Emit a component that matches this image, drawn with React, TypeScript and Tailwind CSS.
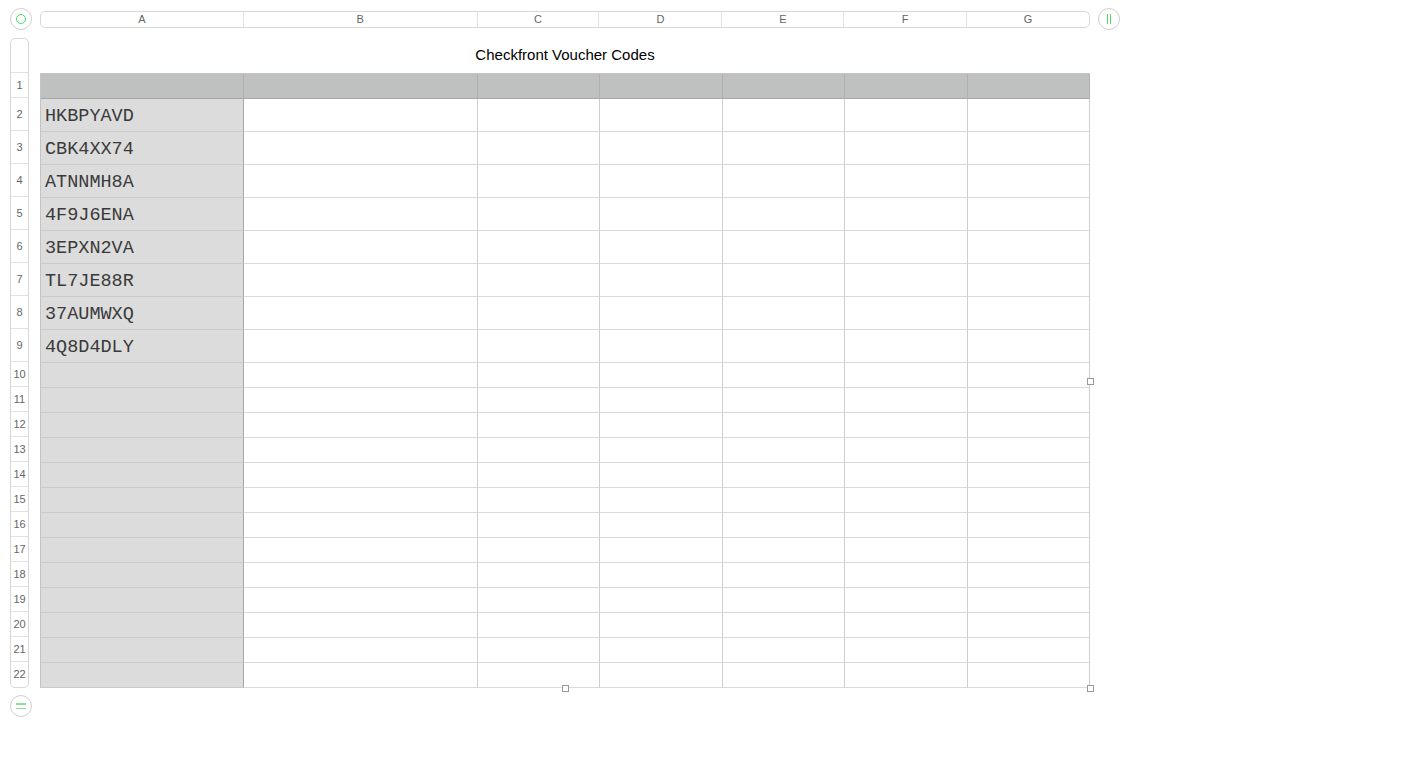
import React from 'react';

const columns = [
  { label: 'A', width: 204 },
  { label: 'B', width: 234 },
  { label: 'C', width: 122 },
  { label: 'D', width: 123 },
  { label: 'E', width: 122 },
  { label: 'F', width: 123 },
  { label: 'G', width: 122 },
];

const codes = ['HKBPYAVD', 'CBK4XX74', 'ATNNMH8A', '4F9J6ENA', '3EPXN2VA', 'TL7JE88R', '37AUMWXQ', '4Q8D4DLY'];

// row heights: header row, 8 code rows, 13 empty rows
const rows = Array.from({ length: 22 }, (_, i) => ({
  n: i + 1,
  h: i === 0 ? 25 : i <= 8 ? 33 : 25,
  code: i >= 1 && i <= 8 ? codes[i - 1] : '',
}));

const Handle = ({ x, y }: { x: number; y: number }) => (
  <div
    className="absolute w-[7px] h-[7px] bg-white border border-[#9a9a9a]"
    style={{ left: x - 3, top: y - 3 }}
  />
);

export default function App() {
  return (
    <div className="relative w-[1424px] h-[758px] bg-white font-['Liberation_Sans',Arial,sans-serif] text-[#333]">
      {/* top bar: select-all, column letters, add column */}
      <div className="flex items-center pt-[8px] pl-[10px]">
        <div className="w-[22px] h-[22px] rounded-full border border-[#cfcfcf] flex items-center justify-center">
          <div className="w-[10px] h-[10px] rounded-full border-[1.5px] border-[#4cd964]" />
        </div>
        <div className="ml-[8px] h-[17px] w-[1050px] flex rounded-[5px] border border-[#d8d8d8]">
          {columns.map((c, i) => (
            <div
              key={c.label}
              className={`flex items-center justify-center text-[11px] text-[#666] ${i < columns.length - 1 ? 'border-r border-[#e2e2e2]' : ''}`}
              style={{ width: c.width - (i === 0 ? 1 : 0) }}
            >
              {c.label}
            </div>
          ))}
        </div>
        <div className="ml-[8px] w-[22px] h-[22px] rounded-full border border-[#cfcfcf] flex items-center justify-center gap-[2px]">
          <div className="w-px h-[10px] bg-[#4cd964]" />
          <div className="w-px h-[10px] bg-[#4cd964]" />
        </div>
      </div>

      <div className="flex mt-[8px] pl-[10px]">
        {/* row numbers */}
        <div className="w-[19px] flex flex-col rounded-[5px] border border-[#d8d8d8]">
          <div className="h-[34px] border-b border-[#e2e2e2]" />
          {rows.map((r) => (
            <div
              key={r.n}
              className={`flex items-center justify-center text-[11px] text-[#666] ${r.n < 22 ? 'border-b border-[#e2e2e2]' : ''}`}
              style={{ height: r.h }}
            >
              {r.n}
            </div>
          ))}
        </div>

        {/* table */}
        <div className="ml-[11px] flex flex-col">
          <div className="h-[35px] flex items-center justify-center text-[15px] text-black">
            Checkfront Voucher Codes
          </div>
          <div className="flex flex-col border-l border-t border-[#c4c4c4]">
            {rows.map((r) => (
              <div key={r.n} className="flex" style={{ height: r.h }}>
                {columns.map((c, ci) => {
                  const header = r.n === 1;
                  const first = ci === 0;
                  let cls = 'border-b border-r ';
                  if (header) cls += 'bg-[#bfc0c0] border-b-[#a6a6a6] border-r-[#b0b0b0] ';
                  else if (first) cls += 'bg-[#dcdcdc] border-b-[#cacaca] border-r-[#a8a8a8] ';
                  else cls += 'bg-white border-b-[#dadada] border-r-[#cfcfcf] ';
                  return (
                    <div
                      key={c.label}
                      className={`${cls}flex items-center pl-[4px] pt-[3px] font-['Liberation_Mono','Courier_New',monospace] text-[18.5px] text-[#3a3a3a]`}
                      style={{ width: c.width - (ci === 0 ? 1 : 0) }}
                    >
                      {first ? r.code : ''}
                    </div>
                  );
                })}
              </div>
            ))}
          </div>
        </div>
      </div>

      {/* add row button */}
      <div className="absolute left-[10px] top-[695px] w-[22px] h-[22px] rounded-full border border-[#cfcfcf] flex flex-col items-center justify-center gap-[3px]">
        <div className="w-[10px] h-[1.5px] bg-[#8fdc9c]" />
        <div className="w-[10px] h-[1.5px] bg-[#8fdc9c]" />
      </div>

      {/* selection handles */}
      <Handle x={1090} y={381} />
      <Handle x={565} y={688} />
      <Handle x={1090} y={688} />
    </div>
  );
}
